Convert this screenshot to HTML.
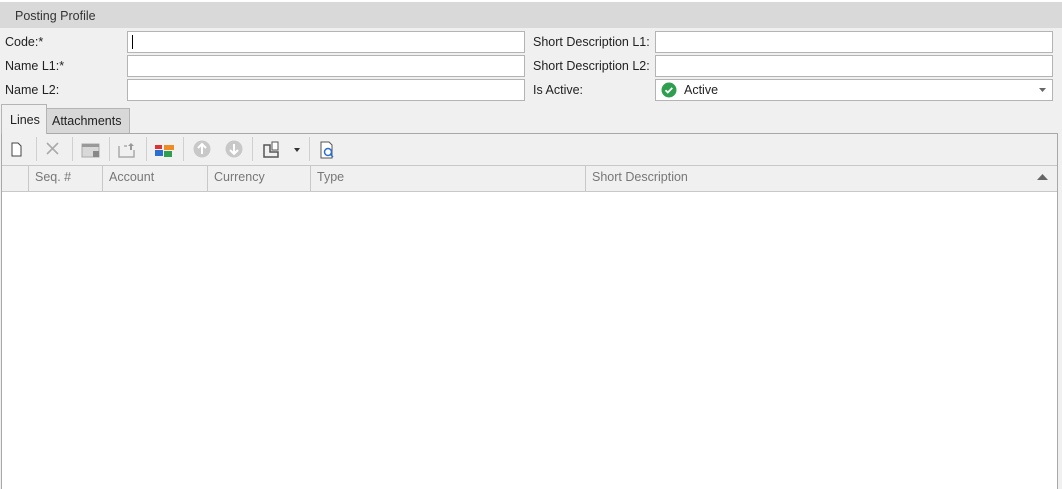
<!DOCTYPE html><html style="width:1062px;height:489px;overflow:hidden"><head><style>
*{box-sizing:border-box;margin:0;padding:0}
body{width:1062px;height:489px;background:#f0f0f0;font-family:"Liberation Sans",sans-serif;font-size:12.5px;color:#222;position:relative;overflow:hidden}
.a{position:absolute}
.inp{position:absolute;background:#fff;border:1px solid #b4b4b4;height:22px}
.lbl{position:absolute;color:#222}
.sep{position:absolute;top:137px;width:1px;height:24px;background:#d0d0d0}
.hc{position:absolute;top:165px;height:27px;border-right:1px solid #c8c8c8;color:#777;padding:5px 0 0 6px}
</style></head><body>
<div class="a" style="left:0;top:0;width:1062px;height:2px;background:#fff"></div>
<div class="a" style="left:0;top:2px;width:1062px;height:26px;background:#d9d9d9;padding:7px 0 0 15px;color:#333">Posting Profile</div>
<div class="lbl" style="left:5px;top:35px">Code:*</div>
<div class="lbl" style="left:5px;top:59px">Name L1:*</div>
<div class="lbl" style="left:5px;top:83px">Name L2:</div>
<div class="inp" style="left:127px;top:31px;width:398px"><div class="a" style="left:4px;top:3px;width:1px;height:14px;background:#000"></div></div>
<div class="inp" style="left:127px;top:55px;width:398px"></div>
<div class="inp" style="left:127px;top:79px;width:398px"></div>
<div class="lbl" style="left:533px;top:35px">Short Description L1:</div>
<div class="lbl" style="left:533px;top:59px">Short Description L2:</div>
<div class="lbl" style="left:533px;top:83px">Is Active:</div>
<div class="inp" style="left:655px;top:31px;width:398px"></div>
<div class="inp" style="left:655px;top:55px;width:398px"></div>
<div class="inp" style="left:655px;top:79px;width:398px">
<svg class="a" style="left:5px;top:2px" width="16" height="16"><circle cx="8" cy="8" r="7.5" fill="#2e9e4f"/><path d="M4.5 8.2l2.3 2.3 4.5-4.6" stroke="#fff" stroke-width="1.8" fill="none"/></svg>
<div class="a" style="left:28px;top:3px">Active</div>
<svg class="a" style="left:383px;top:8px" width="8" height="5"><path d="M0 0h7l-3.5 4z" fill="#666"/></svg>
</div>
<div class="a" style="left:1px;top:104px;width:46px;height:30px;background:#f0f0f0;border:1px solid #b4b4b4;border-bottom:none;padding:8px 0 0 8px;z-index:2">Lines</div>
<div class="a" style="left:46px;top:108px;width:84px;height:26px;background:#d8d8d8;border:1px solid #b4b4b4;padding:5px 0 0 5px">Attachments</div>
<div class="a" style="left:1px;top:133px;width:1057px;height:356px;border:1px solid #a8a8a8;border-bottom:none;background:#fff"></div>
<div class="a" style="left:2px;top:134px;width:1055px;height:31px;background:#f0f0f0"></div>
<svg class="a" style="left:0;top:134px" width="350" height="31">
<path d="M12 9h6l3 3v10h-9z" fill="#fff" stroke="#444"/>
<path d="M47 9l11 11M58 9L47 20" stroke="#aaa" stroke-width="1.6"/>
<rect x="82" y="10" width="17" height="13" fill="#d8d8d8" stroke="#aaa"/><rect x="82" y="10" width="17" height="3" fill="#999"/><rect x="93" y="17" width="6" height="6" fill="#888"/>
<path d="M119 12v11h15v-7M124 12h3" stroke="#aaa" fill="none" stroke-width="1.5"/><path d="M131 9l-3 3h2v4h2v-4h2z" fill="#999"/>
<rect x="155" y="11" width="7" height="4" fill="#d33"/><rect x="164" y="11" width="10" height="5" fill="#f08a24"/><rect x="155" y="16" width="8" height="6" fill="#2a6fd0"/><rect x="164" y="17" width="8" height="6" fill="#2e9e4f"/>
<circle cx="202" cy="15" r="8.5" fill="#c8c8c8"/><path d="M202 20v-9M198 14l4-4 4 4" stroke="#fff" stroke-width="2" fill="none"/>
<circle cx="234" cy="15" r="8.5" fill="#c8c8c8"/><path d="M234 10v9M230 16l4 4 4-4" stroke="#fff" stroke-width="2" fill="none"/>
<path d="M264 11v12h14v-5h-8v-7z" fill="none" stroke="#555" stroke-width="1.5"/><rect x="272" y="8" width="6" height="8" fill="#fff" stroke="#555"/>
<path d="M294 14h6l-3 4z" fill="#333"/>
<path d="M321 8h8l3 3v13h-11z" fill="#fff" stroke="#555"/><circle cx="328" cy="18" r="3.5" fill="none" stroke="#2a6fd0" stroke-width="1.5"/><path d="M330 20l3 3" stroke="#2a6fd0" stroke-width="1.5"/>
</svg>
<div class="sep" style="left:36px"></div><div class="sep" style="left:72px"></div><div class="sep" style="left:109px"></div><div class="sep" style="left:146px"></div><div class="sep" style="left:183px"></div><div class="sep" style="left:252px"></div><div class="sep" style="left:309px"></div>
<div class="a" style="left:2px;top:165px;width:1055px;height:27px;background:#f0f0f0;border-top:1px solid #c8c8c8;border-bottom:1px solid #c8c8c8"></div>
<div class="hc" style="left:2px;width:27px"></div>
<div class="hc" style="left:29px;width:74px">Seq. #</div>
<div class="hc" style="left:103px;width:105px">Account</div>
<div class="hc" style="left:208px;width:103px">Currency</div>
<div class="hc" style="left:311px;width:275px">Type</div>
<div class="hc" style="left:586px;width:471px;border-right:none">Short Description</div>
<svg class="a" style="left:1037px;top:173px" width="12" height="8"><path d="M0 7h11L5.5 1z" fill="#666"/></svg>
</body></html>
